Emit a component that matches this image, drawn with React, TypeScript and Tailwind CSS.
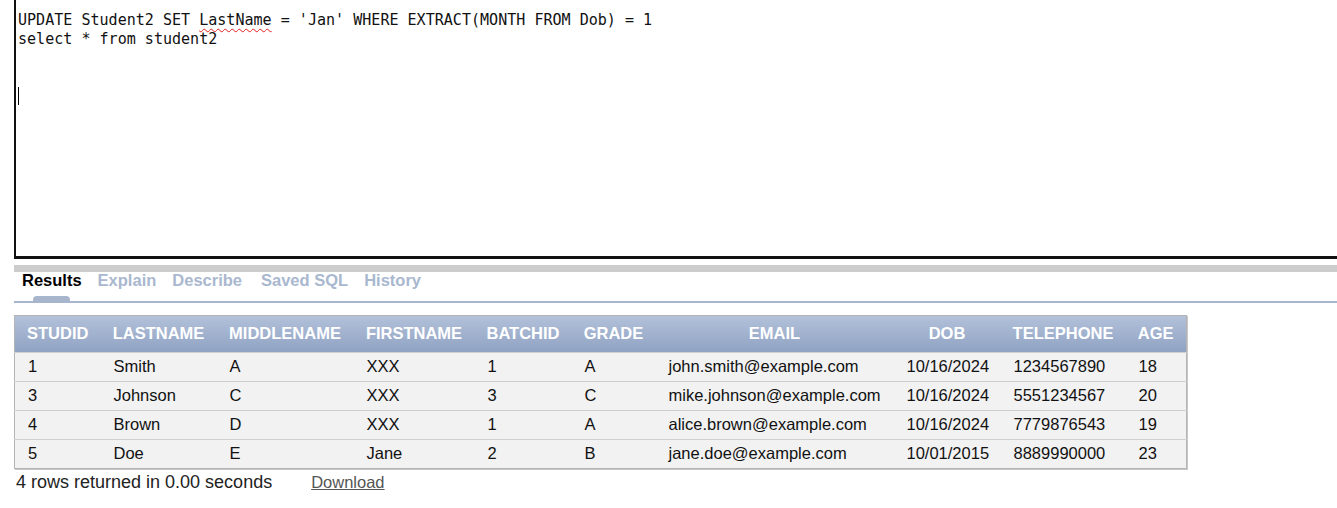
const columns = [
  { name: "STUDID", width: 86 },
  { name: "LASTNAME", width: 116 },
  { name: "MIDDLENAME", width: 137 },
  { name: "FIRSTNAME", width: 121 },
  { name: "BATCHID", width: 97 },
  { name: "GRADE", width: 84 },
  { name: "EMAIL", width: 238 },
  { name: "DOB", width: 107 },
  { name: "TELEPHONE", width: 125 },
  { name: "AGE", width: 61 },
];

const rows = [
  ["1", "Smith", "A", "XXX", "1", "A", "john.smith@example.com", "10/16/2024", "1234567890", "18"],
  ["3", "Johnson", "C", "XXX", "3", "C", "mike.johnson@example.com", "10/16/2024", "5551234567", "20"],
  ["4", "Brown", "D", "XXX", "1", "A", "alice.brown@example.com", "10/16/2024", "7779876543", "19"],
  ["5", "Doe", "E", "Jane", "2", "B", "jane.doe@example.com", "10/01/2015", "8889990000", "23"],
];

const tabs = ["Results", "Explain", "Describe", "Saved SQL", "History"];

function Editor() {
  return (
    <div className="ml-[14px] h-[259px] border-l-2 border-b-[3px] border-[#111] pl-[2px] pt-[11px]">
      <div className="font-['DejaVu_Sans_Mono',monospace] text-[15.05px] leading-[19px] text-[#111] whitespace-pre">
        <div>
          UPDATE Student2 SET{" "}
          <span className="underline decoration-wavy decoration-[#e02020] decoration-1 underline-offset-[3px]">
            LastName
          </span>{" "}
          = 'Jan' WHERE EXTRACT(MONTH FROM Dob) = 1
        </div>
        <div>select * from student2</div>
        <div className="h-[19px]" />
        <div className="h-[19px]" />
        <div className="h-[19px]">
          <span className="inline-block h-[18px] w-px bg-black align-top" />
        </div>
      </div>
    </div>
  );
}

function Tabs() {
  return (
    <div className="ml-[14px]">
      <div className="h-[7px] bg-[#cccccc]" />
      <div className="relative flex h-[29px] items-start gap-[16px] pl-[8px] text-[16.5px] font-bold leading-[18px]">
        {tabs.map((t, i) => (
          <span
            key={t}
            className={
              i === 0
                ? "-mt-px text-black"
                : i === 3
                  ? "-mt-px ml-[3px] text-[#a9b8cf]"
                  : "-mt-px text-[#a9b8cf]"
            }
          >
            {t}
          </span>
        ))}
        <span className="absolute bottom-0 left-[19px] h-[5px] w-[37px] rounded-t-[4px] bg-[#a7b6cd]" />
      </div>
      <div className="h-[2px] bg-[#a7b6cd]" />
    </div>
  );
}

export default function App() {
  return (
    <div className="h-[508px] w-full overflow-hidden bg-white font-['Liberation_Sans',Arial,sans-serif]">
      <Editor />
      <div className="mt-[6px]">
        <Tabs />
      </div>

      <div className="ml-[14px] mt-[12px]">
        <table className="table-fixed border-collapse border border-[#b4b4b4] text-[16.5px] shadow-[1px_1px_0_#c8c8c8]">
          <colgroup>
            {columns.map((c) => (
              <col key={c.name} style={{ width: c.width }} />
            ))}
          </colgroup>
          <thead>
            <tr className="h-[37px] bg-gradient-to-b from-[#b3c1da] to-[#8ea2c2]">
              {columns.map((c) => (
                <th
                  key={c.name}
                  className="whitespace-nowrap px-0 pb-[2px] text-center font-bold text-white"
                >
                  {c.name}
                </th>
              ))}
            </tr>
          </thead>
          <tbody>
            {rows.map((r, i) => (
              <tr key={i} className="h-[29px] border-t border-[#cfcfcf] bg-[#f2f2f2]">
                {r.map((v, j) => (
                  <td
                    key={j}
                    className="whitespace-nowrap pb-[2px] pl-[13px] text-left text-[#111]"
                  >
                    {v}
                  </td>
                ))}
              </tr>
            ))}
          </tbody>
        </table>
      </div>

      <div className="ml-[16px] flex items-center text-[#222]">
        <span className="text-[18px]">4 rows returned in 0.00 seconds</span>
        <a className="ml-[39px] text-[16.5px] text-[#555] underline">Download</a>
      </div>
    </div>
  );
}
